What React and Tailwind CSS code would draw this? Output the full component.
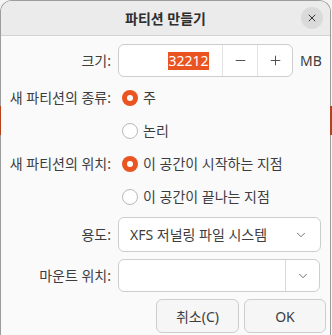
import { ChevronDown, Minus, Plus, X } from 'lucide-react';

const FONT = { fontFamily: '"Noto Sans", "Noto Sans CJK KR", sans-serif' };

function Radio({ checked, label }) {
  return (
    <div className="flex items-center h-[33px] pl-[4px]">
      {checked ? (
        <span className="w-[16px] h-[16px] rounded-full bg-[#e95420] flex items-center justify-center">
          <span className="w-[6px] h-[6px] rounded-full bg-white" />
        </span>
      ) : (
        <span className="w-[16px] h-[16px] rounded-full bg-white border border-[#b9b9b9]" />
      )}
      <span className="ml-[5px]">{label}</span>
    </div>
  );
}

function Label({ children, className = '' }) {
  return (
    <div className={`w-[111px] text-right pr-[1px] shrink-0 ${className}`}>
      {children}
    </div>
  );
}

export default function App() {
  return (
    <div
      className="relative w-[332px] h-[335px] bg-[#f4f4f4] overflow-hidden text-[14px] text-[#3d3d3d]"
      style={FONT}
    >
      {/* background window edges */}
      <div className="absolute left-0 top-[106px] w-[1px] h-[29px] bg-[#b4421c]" />
      <div className="absolute left-[330px] top-[106px] w-[2px] h-[29px] bg-[#b4421c]" />

      <div className="w-[331px] h-[335px] bg-[#fafafa] border-x border-t border-[#9c9c9c] rounded-t-[12px] overflow-hidden">
        {/* title bar */}
        <div className="grid grid-cols-[40px_1fr_40px] items-center h-[35px] bg-[#ebebeb] border-b border-[#d3d3d3]">
          <div />
          <div className="text-center font-bold text-[#2e2e2e]">파티션 만들기</div>
          <div className="flex justify-end pr-[7px]">
            <button className="w-[22px] h-[22px] rounded-full bg-[#dadada] flex items-center justify-center">
              <X size={12} strokeWidth={2} className="text-[#333]" />
            </button>
          </div>
        </div>

        <div className="pt-[8px]">
          {/* size */}
          <div className="flex items-center">
            <Label>크기:</Label>
            <div className="ml-[6px] flex h-[33px] w-[175px] bg-white border border-[#cdcdcd] rounded-[6px]">
              <div className="flex-1 flex items-center justify-end pr-[13px]">
                <span className="bg-[#e95420] text-white leading-[18px] px-[0.5px]">32212</span>
              </div>
              <div className="w-[35px] border-l border-[#e2e2e2] flex items-center justify-center">
                <Minus size={15} strokeWidth={1.4} className="text-[#3d3d3d]" />
              </div>
              <div className="w-[35px] border-l border-[#e2e2e2] flex items-center justify-center">
                <Plus size={15} strokeWidth={1.4} className="text-[#3d3d3d]" />
              </div>
            </div>
            <span className="ml-[7px]">MB</span>
          </div>

          {/* type */}
          <div className="flex mt-[4px]">
            <Label className="h-[33px] flex items-center justify-end">새 파티션의 종류:</Label>
            <div className="ml-[6px]">
              <Radio checked label="주" />
              <Radio label="논리" />
            </div>
          </div>

          {/* position */}
          <div className="flex">
            <Label className="h-[33px] flex items-center justify-end">새 파티션의 위치:</Label>
            <div className="ml-[6px]">
              <Radio checked label="이 공간이 시작하는 지점" />
              <Radio label="이 공간이 끝나는 지점" />
            </div>
          </div>

          {/* filesystem */}
          <div className="flex items-center mt-[4px]">
            <Label>용도:</Label>
            <div className="ml-[6px] flex items-center h-[35px] w-[203px] bg-white border border-[#cdcdcd] rounded-[6px] pl-[11px] pr-[12px]">
              <span className="flex-1">XFS 저널링 파일 시스템</span>
              <ChevronDown size={14} strokeWidth={1.4} className="text-[#555]" />
            </div>
          </div>

          {/* mount point */}
          <div className="flex items-center mt-[7px]">
            <Label>마운트 위치:</Label>
            <div className="ml-[6px] flex h-[33px] w-[202px] bg-white border border-[#cdcdcd] rounded-[6px]">
              <div className="flex-1" />
              <div className="w-[34px] border-l border-[#d9d9d9] flex items-center justify-center">
                <ChevronDown size={14} strokeWidth={1.4} className="text-[#555]" />
              </div>
            </div>
          </div>

          {/* buttons */}
          <div className="flex justify-end gap-[5px] mt-[7px] pr-[4px]">
            <button className="w-[83px] h-[34px] bg-[#f6f6f6] border border-[#cdcdcd] rounded-[6px] text-[#3d3d3d]">
              취소(C)
            </button>
            <button className="w-[82px] h-[34px] bg-[#f6f6f6] border border-[#cdcdcd] rounded-[6px] text-[#3d3d3d]">
              OK
            </button>
          </div>
        </div>
      </div>
    </div>
  );
}
